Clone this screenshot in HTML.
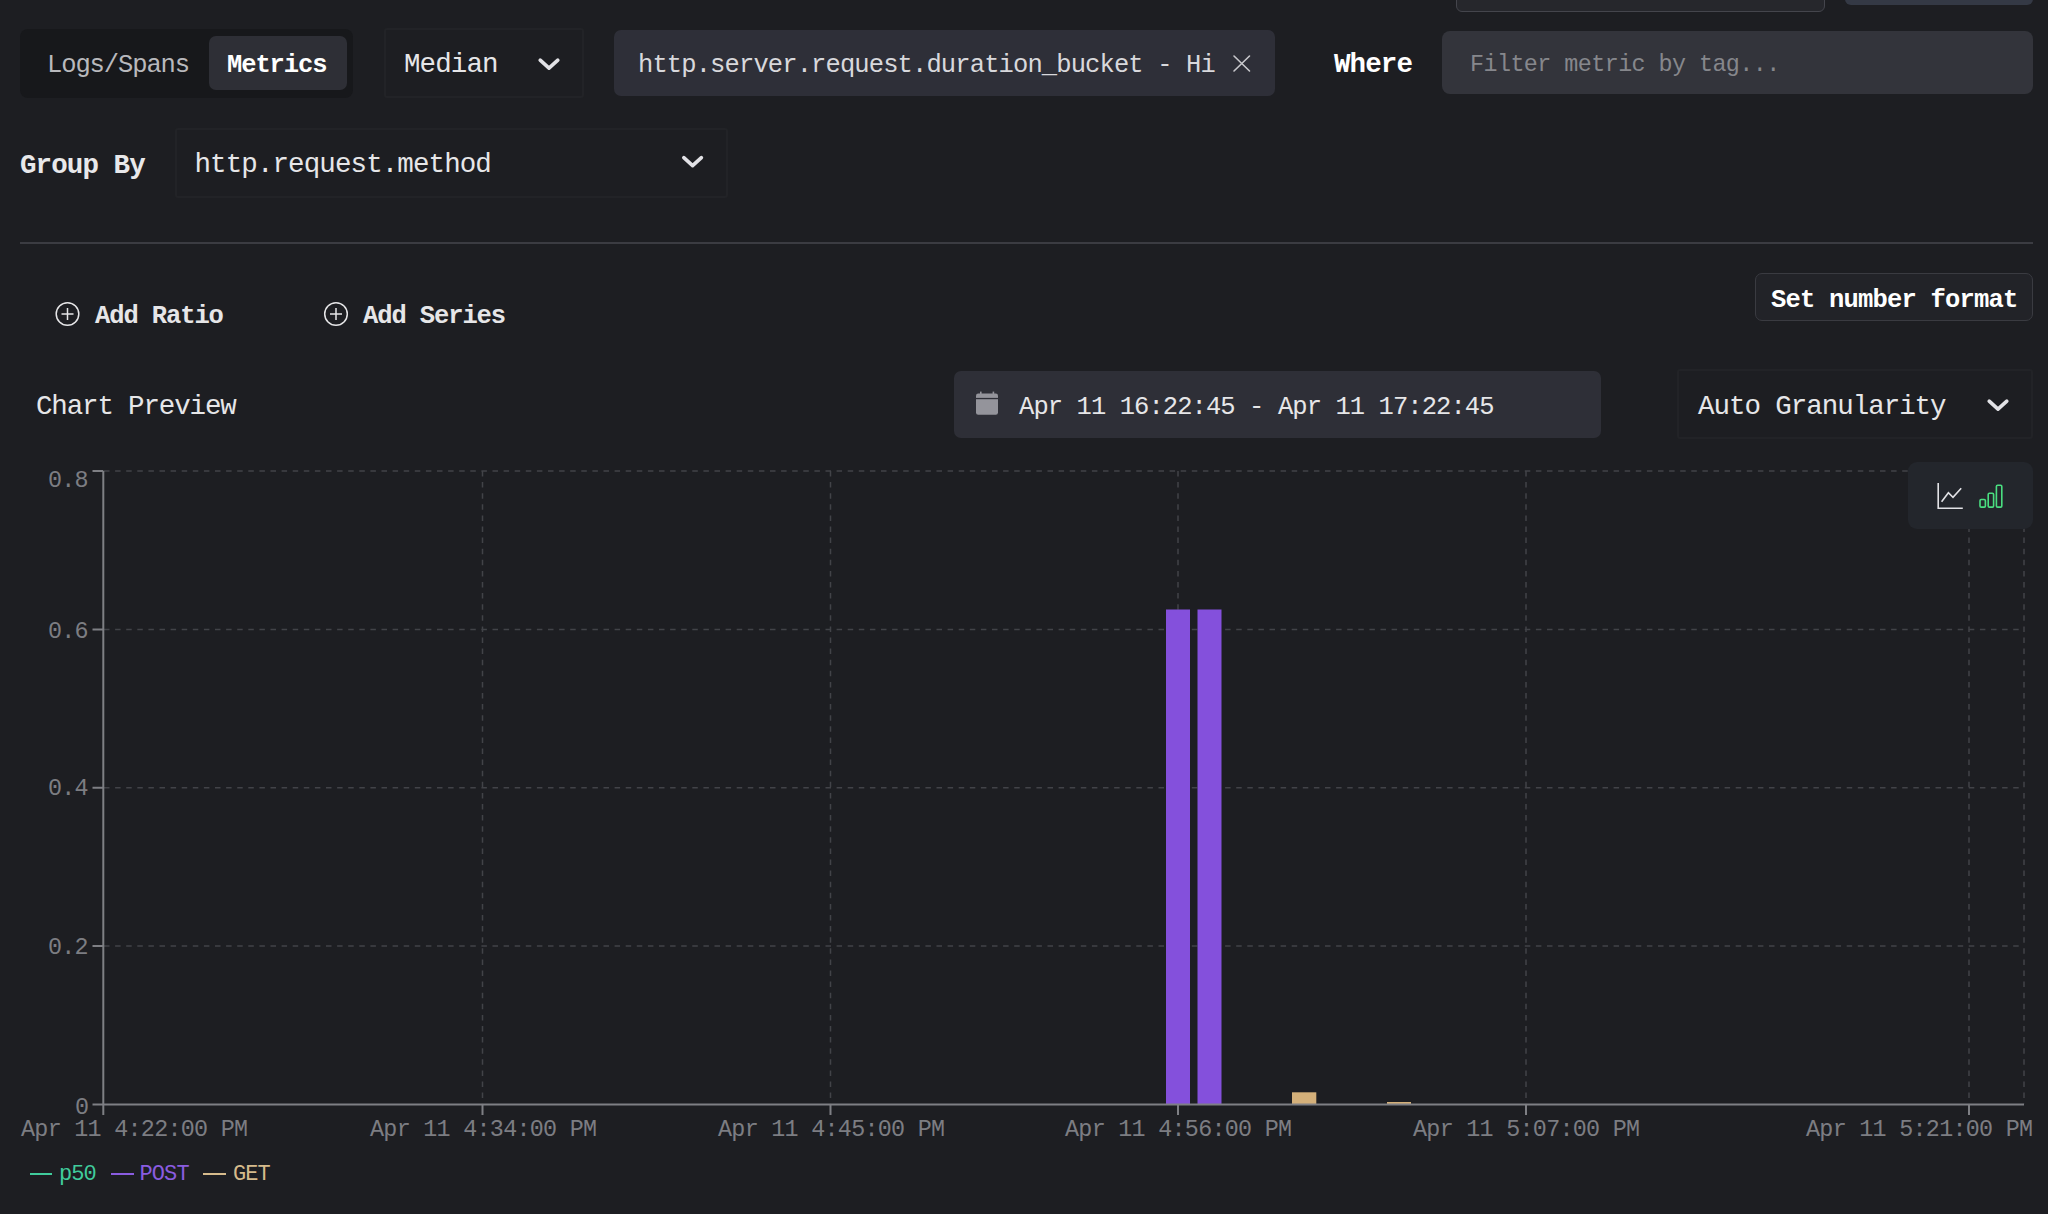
<!DOCTYPE html>
<html><head><meta charset="utf-8">
<style>
*{box-sizing:border-box;margin:0;padding:0}
html,body{width:2048px;height:1214px;overflow:hidden;background:#1d1e22;font-family:"Liberation Mono",monospace;color:#e6e6e8}
.a{position:absolute}
.t{position:absolute;white-space:pre;line-height:1}
.s24{font-size:25.5px;letter-spacing:-1.1px}
.s26{font-size:27.5px;letter-spacing:-0.9px}
.s22{font-size:23.4px;letter-spacing:-0.84px}
.b{font-weight:bold}
.lg{font-size:22px;letter-spacing:-0.9px}
svg{position:absolute;left:0;top:0}
</style></head><body>
<!-- top partial elements -->
<div class="a" style="left:1456px;top:-20px;width:369px;height:32px;border:1.5px solid #44454c;border-radius:6px;background:#26272c"></div>
<div class="a" style="left:1845px;top:-20px;width:188px;height:25px;border-radius:6px;background:#343945"></div>

<!-- segmented -->
<div class="a" style="left:20px;top:29px;width:332.5px;height:68.5px;border-radius:8px;background:#17181b"></div>
<div class="a" style="left:209px;top:36px;width:138px;height:54px;border-radius:7px;background:#2e2f36"></div>
<div class="t s24" style="left:47px;top:52.5px;color:#b9b9bd">Logs/Spans</div>
<div class="t s24 b" style="left:227px;top:52.5px;color:#fff">Metrics</div>

<!-- median select -->
<div class="a" style="left:384px;top:28px;width:200px;height:70px;border:2px solid #222327;border-radius:3px"></div>
<div class="t s26" style="left:404px;top:51px">Median</div>

<!-- metric pill -->
<div class="a" style="left:614px;top:30px;width:661px;height:66px;border-radius:7px;background:#2e2f38"></div>
<div class="t s24" style="left:638px;top:52.5px;letter-spacing:-0.88px;color:#d8d8dc">http.server.request.duration_bucket - Hi</div>

<div class="t s26 b" style="left:1334px;top:51px;color:#fff">Where</div>
<div class="a" style="left:1442px;top:31px;width:591px;height:63px;border-radius:8px;background:#33343b"></div>
<div class="t s22" style="left:1470px;top:54px;letter-spacing:-0.57px;color:#86878c">Filter metric by tag...</div>

<!-- group by -->
<div class="t s26 b" style="left:20px;top:152px;color:#e8e8ea">Group By</div>
<div class="a" style="left:175px;top:128px;width:553px;height:70px;border:2px solid #222327;border-radius:3px"></div>
<div class="t s26" style="left:194.5px;top:151px">http.request.method</div>

<div class="a" style="left:20px;top:242px;width:2013px;height:2px;background:#3b3c42"></div>

<!-- add ratio/series -->
<div class="t s24 b" style="left:95px;top:304px">Add Ratio</div>
<div class="t s24 b" style="left:363px;top:304px">Add Series</div>

<div class="a" style="left:1755px;top:273px;width:278px;height:48px;border:1.5px solid #3a3b41;border-radius:7px;background:#222328"></div>
<div class="t s24 b" style="left:1771px;top:287.5px;letter-spacing:-0.8px;color:#fff">Set number format</div>

<div class="t s26" style="left:36px;top:393px;letter-spacing:-1.15px">Chart Preview</div>

<div class="a" style="left:954px;top:371px;width:647px;height:67px;border-radius:7px;background:#2e2f37"></div>
<div class="t s24" style="left:1019px;top:394.5px;letter-spacing:-0.92px">Apr 11 16:22:45 - Apr 11 17:22:45</div>

<div class="a" style="left:1677px;top:369px;width:356px;height:70px;border:2px solid #222327;border-radius:3px"></div>
<div class="t s26" style="left:1698px;top:393px;letter-spacing:-1.03px">Auto Granularity</div>


<svg width="2048" height="1214" viewBox="0 0 2048 1214">
  <!-- chevrons -->
  <g fill="none" stroke="#e2e2e6" stroke-width="3.6" stroke-linecap="round" stroke-linejoin="round">
    <path d="M540.2 60.2 L549 68.2 L557.8 60.2"/>
    <path d="M683.8 157.7 L692.6 165.7 L701.4 157.7"/>
    <path d="M1989.2 401.2 L1998 409.2 L2006.8 401.2"/>
  </g>
  <!-- X -->
  <g stroke="#c8c8cc" stroke-width="1.6" stroke-linecap="round">
    <path d="M1234 56 L1249.5 71"/><path d="M1249.5 56 L1234 71"/>
  </g>
  <!-- add icons -->
  <g fill="none" stroke="#e6e6e8" stroke-width="1.5">
    <circle cx="67.5" cy="314" r="11.3"/>
    <path d="M61.5 314 H73.5 M67.5 308 V320"/>
    <circle cx="336" cy="314" r="11.3"/>
    <path d="M330 314 H342 M336 308 V320"/>
  </g>
  <!-- calendar -->
  <g fill="#94949b">
    <rect x="976" y="393.5" width="22" height="21.3" rx="2.2"/>
    <rect x="980" y="391.6" width="1.6" height="3"/>
    <rect x="992.6" y="391.6" width="1.6" height="3"/>
  </g>
  <rect x="975" y="397.9" width="24" height="1.3" fill="#2e2f37"/>

  <!-- chart grid -->
  <g stroke="#424348" stroke-width="1.5" stroke-dasharray="5.5 5.6">
    <path d="M104 471 H2024"/>
    <path d="M104 629.5 H2024"/>
    <path d="M104 787.75 H2024"/>
    <path d="M104 946 H2024"/>
    <path d="M482.5 471 V1104"/>
    <path d="M830.5 471 V1104"/>
    <path d="M1178 471 V1104"/>
    <path d="M1526 471 V1104"/>
    <path d="M1969 471 V1104"/>
    <path d="M2024 471 V1104"/>
  </g>
  <!-- bars -->
  <rect x="1166" y="609.5" width="24" height="495" fill="#8450dc"/>
  <rect x="1197.5" y="609.5" width="24" height="495" fill="#8450dc"/>
  <rect x="1292" y="1092.3" width="24.3" height="12" fill="#d4b07a"/>
  <rect x="1387" y="1102" width="24" height="2.5" fill="#d4b07a"/>
  <!-- axes -->
  <g stroke="#7e7f84" stroke-width="2" fill="none">
    <path d="M103.3 471 V1115"/>
    <path d="M92.5 1104.5 H2024"/>
    <path d="M92.5 471 H103.3"/>
    <path d="M92.5 629.5 H103.3"/>
    <path d="M92.5 787.75 H103.3"/>
    <path d="M92.5 946 H103.3"/>
    <path d="M482.5 1104 V1115"/>
    <path d="M830.5 1104 V1115"/>
    <path d="M1178 1104 V1115"/>
    <path d="M1526 1104 V1115"/>
    <path d="M1969 1104 V1115"/>
  </g>
</svg>

<!-- chart type toggle -->
<div class="a" style="left:1908px;top:462px;width:125px;height:67px;border-radius:9px;background:#23262c"></div>
<svg width="2048" height="1214" viewBox="0 0 2048 1214">
  <!-- toggle icons -->
  <g fill="none" stroke="#e2e2e6" stroke-width="1.6">
    <path d="M1938.2 483 V508.3 H1962.8"/>
    <path d="M1941.6 501.8 L1948.4 492.8 L1953 497.4 L1961.2 488.3"/>
  </g>
  <g fill="none" stroke="#4ade80" stroke-width="1.6">
    <rect x="1980" y="499.5" width="5.4" height="7.6" rx="1.2"/>
    <rect x="1988.2" y="493.2" width="5.4" height="13.9" rx="1.2"/>
    <rect x="1996.4" y="485.2" width="5.4" height="21.9" rx="1.2"/>
  </g>
</svg>
<!-- y labels -->
<div class="t s22" style="left:48px;top:470.4px;color:#7c7d82">0.8</div>
<div class="t s22" style="left:48px;top:621px;color:#7c7d82">0.6</div>
<div class="t s22" style="left:48px;top:778.4px;color:#7c7d82">0.4</div>
<div class="t s22" style="left:48px;top:937.3px;color:#7c7d82">0.2</div>
<div class="t s22" style="left:75px;top:1096.6px;color:#7c7d82">0</div>
<!-- x labels -->
<div class="t s22" style="left:21px;top:1119px;letter-spacing:-0.72px;color:#7c7d82">Apr 11 4:22:00 PM</div>
<div class="t s22" style="left:370px;top:1119px;letter-spacing:-0.72px;color:#7c7d82">Apr 11 4:34:00 PM</div>
<div class="t s22" style="left:718px;top:1119px;letter-spacing:-0.72px;color:#7c7d82">Apr 11 4:45:00 PM</div>
<div class="t s22" style="left:1065px;top:1119px;letter-spacing:-0.72px;color:#7c7d82">Apr 11 4:56:00 PM</div>
<div class="t s22" style="left:1413px;top:1119px;letter-spacing:-0.72px;color:#7c7d82">Apr 11 5:07:00 PM</div>
<div class="t s22" style="left:1806px;top:1119px;letter-spacing:-0.72px;color:#7c7d82">Apr 11 5:21:00 PM</div>

<!-- legend -->
<div class="a" style="left:29.5px;top:1173.2px;width:22.5px;height:2.2px;background:#40cc9c"></div>
<div class="t lg" style="left:59px;top:1164px;color:#40cc9c">p50</div>
<div class="a" style="left:111px;top:1173.2px;width:22.5px;height:2.2px;background:#8a5ce0"></div>
<div class="t lg" style="left:139.5px;top:1164px;color:#8a5ce0">POST</div>
<div class="a" style="left:203px;top:1173.2px;width:22.5px;height:2.2px;background:#d6bb8c"></div>
<div class="t lg" style="left:233px;top:1164px;color:#d6bb8c">GET</div>
</body></html>
